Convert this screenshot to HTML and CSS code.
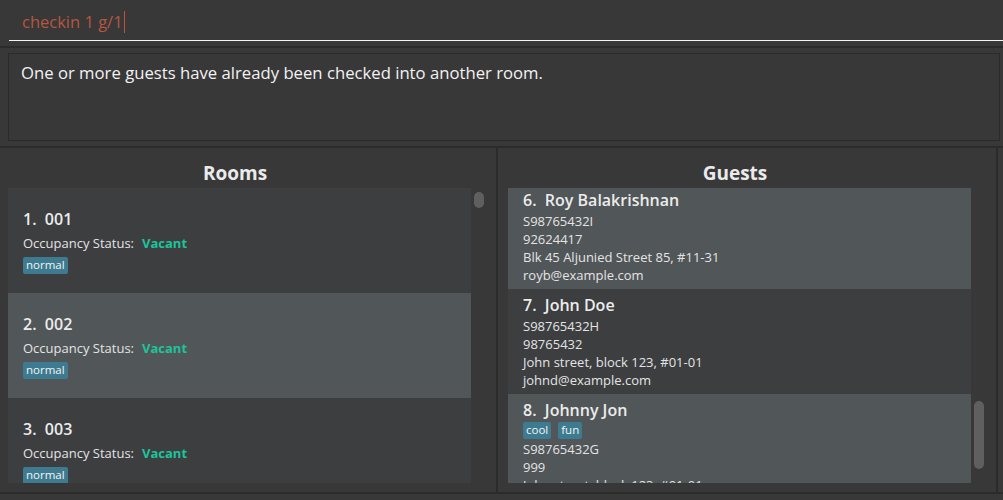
FILE: index.html
```html
<!DOCTYPE html>
<html>
<head>
<meta charset="utf-8">
<link rel="stylesheet" href="styles.css">
</head>
<body>
<div class="app">
  <div class="command">
    <div class="command-field"><span class="command-text">checkin 1 g/1</span><span class="caret"></span></div>
  </div>
  <div class="sep"></div>
  <div class="result">One or more guests have already been checked into another room.</div>
  <div class="sep"></div>
  <div class="panels">
    <div class="panel rooms">
      <div class="panel-title">Rooms</div>
      <div class="list-wrap">
        <div class="list">
          <div class="room-card even">
            <div class="big">1.&nbsp;&nbsp;001</div>
            <div class="status">Occupancy Status:<span class="vacant">Vacant</span></div>
            <div class="tags"><span class="tag">normal</span></div>
          </div>
          <div class="room-card odd">
            <div class="big">2.&nbsp;&nbsp;002</div>
            <div class="status">Occupancy Status:<span class="vacant">Vacant</span></div>
            <div class="tags"><span class="tag">normal</span></div>
          </div>
          <div class="room-card even">
            <div class="big">3.&nbsp;&nbsp;003</div>
            <div class="status">Occupancy Status:<span class="vacant">Vacant</span></div>
            <div class="tags"><span class="tag">normal</span></div>
          </div>
        </div>
        <div class="scroll"><div class="thumb thumb-rooms"></div></div>
      </div>
    </div>
    <div class="divider"></div>
    <div class="panel guests">
      <div class="panel-title">Guests</div>
      <div class="list-wrap">
        <div class="list">
          <div class="list-inner shifted">
            <div class="guest-card odd">
              <div class="big">6.&nbsp;&nbsp;Roy Balakrishnan</div>
              <div class="small">S98765432I</div>
              <div class="small">92624417</div>
              <div class="small">Blk 45 Aljunied Street 85, #11-31</div>
              <div class="small">royb@example.com</div>
            </div>
            <div class="guest-card even">
              <div class="big">7.&nbsp;&nbsp;John Doe</div>
              <div class="small">S98765432H</div>
              <div class="small">98765432</div>
              <div class="small">John street, block 123, #01-01</div>
              <div class="small">johnd@example.com</div>
            </div>
            <div class="guest-card odd">
              <div class="big">8.&nbsp;&nbsp;Johnny Jon</div>
              <div class="tags guest-tags"><span class="tag">cool</span><span class="tag">fun</span></div>
              <div class="small">S98765432G</div>
              <div class="small">999</div>
              <div class="small">John street, block 123, #01-01</div>
              <div class="small">johnny@example.com</div>
            </div>
          </div>
        </div>
        <div class="scroll"><div class="thumb thumb-guests"></div></div>
      </div>
    </div>
    <div class="divider"></div>
  </div>
  <div class="bottom-sep"></div>
</div>
</body>
</html>
```
FILE: styles.css
```css
* { box-sizing: border-box; }
html, body {
  margin: 0;
  padding: 0;
  background: #383838;
  overflow: hidden;
}
body {
  width: 1003px;
  height: 500px;
  font-family: "Open Sans", "Noto Sans", sans-serif;
  color: #ececec;
}
.app {
  display: flex;
  flex-direction: column;
  height: 500px;
}
.command {
  padding-left: 9px;
}
.command-field {
  height: 41px;
  border-bottom: 1px solid #f4f4f4;
  display: flex;
  align-items: center;
  padding-left: 13px;
  padding-top: 3px;
}
.command-text {
  color: #b6563f;
  font-size: 16.5px;
}
.caret {
  display: inline-block;
  width: 1px;
  height: 22px;
  background: #b6563f;
  margin-left: 1px;
}
.sep {
  height: 2px;
  background: #2b2b2b;
  margin-top: 5px;
  flex: none;
}
.result {
  margin: 5px 3px 5px 8px;
  height: 88px;
  border: 1px solid #2a2a2a;
  padding: 8px 12px;
  font-size: 16.7px;
  line-height: 22px;
  color: #f2f2f2;
  flex: none;
}
.result + .sep { margin-top: 0; }
.panels {
  display: flex;
  height: 344px;
  flex: none;
}
.panel {
  display: flex;
  flex-direction: column;
}
.rooms {
  width: 496px;
  padding-left: 8px;
}
.guests {
  width: 498px;
  padding-left: 10px;
}
.divider {
  width: 2px;
  background: #2b2b2b;
  flex: none;
}
.panel-title {
  height: 40px;
  display: flex;
  align-items: center;
  justify-content: center;
  padding-top: 9px;
  padding-right: 34px;
  font-weight: 700;
  font-size: 19px;
  color: #ebebeb;
}
.list-wrap {
  display: flex;
  height: 295px;
}
.list {
  width: 463px;
  height: 295px;
  overflow: hidden;
  flex: none;
}
.shifted { margin-top: -4px; }
.scroll {
  width: 10px;
  margin-left: 3px;
  position: relative;
}
.thumb {
  position: absolute;
  left: 0;
  width: 10px;
  border-radius: 5px;
  background: #5f5f5f;
}
.thumb-rooms { top: 4px; height: 16px; }
.thumb-guests { top: 213px; height: 68px; }
.even { background: #3c3e40; }
.odd { background: #515658; }
.room-card {
  height: 105px;
  padding: 19px 15px 0 15px;
}
.big {
  font-size: 16px;
  font-weight: 600;
  color: #ececec;
  line-height: 24px;
}
.status {
  font-size: 13px;
  line-height: 24px;
  color: #e4e4e4;
}
.vacant {
  color: #1cc49a;
  font-weight: 700;
  margin-left: 8px;
}
.tags {
  display: flex;
  gap: 7px;
  height: 20px;
  align-items: center;
}
.tag {
  background: #3e7b91;
  color: #f4f4f4;
  font-size: 11.5px;
  line-height: 16px;
  padding: 0 3px 1px;
  border-radius: 2px;
}
.guest-card {
  height: 105px;
  padding: 5px 15px 0 15px;
}
.guest-card .big { line-height: 23px; }
.guest-tags {
  height: 17px;
  margin-bottom: 1px;
}
.small {
  font-size: 13px;
  line-height: 18px;
  color: #e4e4e4;
}
.bottom-sep {
  height: 2px;
  background: #2b2b2b;
  flex: none;
}
```
